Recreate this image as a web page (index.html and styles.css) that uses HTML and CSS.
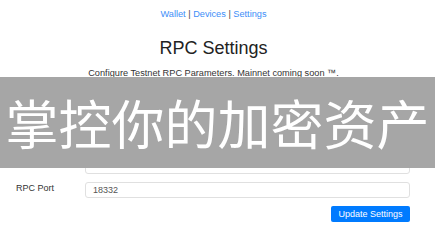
FILE: index.html
```html
<!DOCTYPE html>
<html>
<head>
    <link rel="stylesheet" href="styles.css">
</head>
<body>
    <div class="header">
        <div class="nav">
            <a href="#">Wallet</a> | <a href="#">Devices</a> | <a href="#">Settings</a>
        </div>

        <h2 class="title">RPC Settings</h2>
        <p class="subtitle">Configure Testnet RPC Parameters. Mainnet coming soon &trade;.</p>
    </div>

    <form id="rpc-form" class="rpc-form" onsubmit="return false;">
        <div class="row">
            <label for="rpc-host">RPC Host</label>
            <input type="text" id="rpc-host" value="">
        </div>
        <div class="row">
            <label for="rpc-user">RPC User</label>
            <input type="text" id="rpc-user" value="">
        </div>
        <div class="row">
            <label for="rpc-pass">RPC Password</label>
            <input type="password" id="rpc-pass" value="">
        </div>
        <div class="row">
            <label for="rpc-port">RPC Port</label>
            <input type="text" id="rpc-port" value="18332">
        </div>
        <div class="actions">
            <button type="button">Update Settings</button>
        </div>
    </form>

    <div class="banner">掌控你的加密资产</div>
</body>
</html>
```

FILE: styles.css
```css
body {
    margin: 0;
    font-family: "Liberation Sans", Arial, sans-serif;
    color: #222;
    background: #fff;
}

.header {
    padding-right: 8px;
}

.nav {
    padding-top: 8px;
    text-align: center;
    font-size: 9.2px;
    line-height: 12px;
    color: #444;
}

.nav a {
    color: #3d8ef8;
    text-decoration: none;
}

.title {
    margin: 18px 0 0;
    text-align: center;
    font-size: 18px;
    font-weight: normal;
    line-height: 21.6px;
    color: #222;
}

.subtitle {
    margin: 7px 0 0;
    text-align: center;
    font-size: 9.2px;
    line-height: 12px;
    color: #333;
}

.rpc-form {
    margin-top: 31px;
    padding: 0 25px 0 16px;
}

.row {
    display: flex;
    align-items: flex-start;
    margin-bottom: 8px;
}

.row label {
    width: 69px;
    font-size: 9px;
    line-height: 13px;
    color: #333;
}

.row input {
    flex: 1;
    box-sizing: border-box;
    height: 16px;
    padding: 0 7px;
    border: 1px solid #e0e0e0;
    border-radius: 3px;
    font-family: "Liberation Sans", Arial, sans-serif;
    font-size: 9px;
    color: #555;
}

.actions {
    display: flex;
    justify-content: flex-end;
}

.actions button {
    box-sizing: border-box;
    width: 79px;
    height: 16px;
    padding: 0;
    background: #007bff;
    color: #fff;
    border: none;
    border-radius: 2px;
    font-family: "Liberation Sans", Arial, sans-serif;
    font-size: 9px;
    cursor: pointer;
}

.banner {
    position: absolute;
    top: 77px;
    left: 0;
    right: 0;
    height: 91px;
    display: flex;
    align-items: center;
    justify-content: center;
    background: #a6a6a6;
    color: #fff;
    font-family: "Noto Sans CJK SC", sans-serif;
    font-size: 53px;
    line-height: 1;
    white-space: nowrap;
}
```
